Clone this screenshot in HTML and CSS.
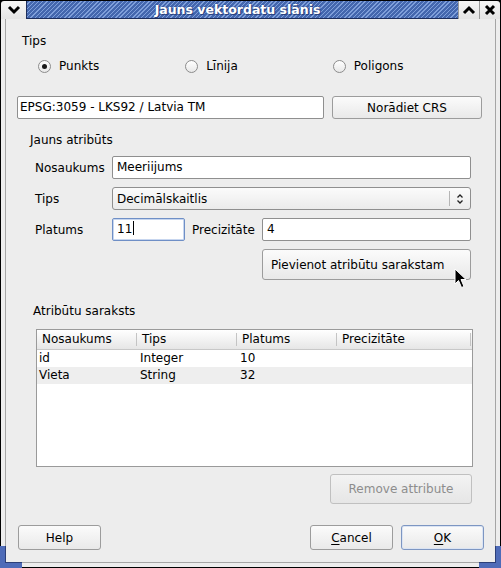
FILE: index.html
```html
<!DOCTYPE html>
<html>
<head>
<meta charset="utf-8">
<link rel="stylesheet" href="styles.css">
</head>
<body>
<div class="window">
  <div class="titlebar">
    <div class="tbtn tbtn-left">
      <svg width="14" height="10" viewBox="0 0 14 10"><polyline points="2,2 7,7 12,2" fill="none" stroke="#000" stroke-width="3"/></svg>
    </div>
    <div class="tcaption"><span>Jauns vektordatu slānis</span></div>
    <div class="tbtn">
      <svg width="14" height="10" viewBox="0 0 14 10"><polyline points="2,8 7,3 12,8" fill="none" stroke="#000" stroke-width="3"/></svg>
    </div>
    <div class="tbtn tbtn-right">
      <svg width="12" height="12" viewBox="0 0 12 12"><path d="M2 2 L10 10 M10 2 L2 10" stroke="#000" stroke-width="3"/></svg>
    </div>
  </div>
  <div class="frame">
    <div class="client">
      <div class="lbl tips-lbl">Tips</div>
      <div class="radios">
        <div class="radio r1"><span class="rdot on"></span>Punkts</div>
        <div class="radio r2"><span class="rdot"></span>Līnija</div>
        <div class="radio r3"><span class="rdot"></span>Poligons</div>
      </div>
      <div class="crs-row">
        <div class="input crs-input">EPSG:3059 - LKS92 / Latvia TM</div>
        <div class="btn crs-btn">Norādiet CRS</div>
      </div>
      <div class="lbl grp-lbl">Jauns atribūts</div>
      <div class="frow">
        <div class="flabel">Nosaukums</div>
        <div class="input wide">Meeriijums</div>
      </div>
      <div class="frow">
        <div class="flabel">Tips</div>
        <div class="combo wide"><span class="ctext">Decimālskaitlis</span><span class="csep"></span>
          <svg class="carrow" width="8" height="12" viewBox="0 0 8 12"><polyline points="1.5,4.5 4,2 6.5,4.5" fill="none" stroke="#222" stroke-width="1.3"/><polyline points="1.5,7.5 4,10 6.5,7.5" fill="none" stroke="#222" stroke-width="1.3"/></svg>
        </div>
      </div>
      <div class="frow">
        <div class="flabel">Platums</div>
        <div class="input focus narrow">11<span class="caret"></span></div>
        <div class="flabel2">Precizitāte</div>
        <div class="input prec">4</div>
      </div>
      <div class="addrow">
        <div class="btn add-btn">Pievienot atribūtu sarakstam</div>
      </div>
      <div class="lbl list-lbl">Atribūtu saraksts</div>
      <div class="table">
        <div class="thead">
          <div class="th c1">Nosaukums</div>
          <div class="th c2">Tips</div>
          <div class="th c3">Platums</div>
          <div class="th c4">Precizitāte</div>
        </div>
        <div class="trow">
          <div class="td c1">id</div><div class="td c2">Integer</div><div class="td c3">10</div><div class="td c4"></div>
        </div>
        <div class="trow alt">
          <div class="td c1">Vieta</div><div class="td c2">String</div><div class="td c3">32</div><div class="td c4"></div>
        </div>
      </div>
      <div class="remrow">
        <div class="btn disabled rem-btn">Remove attribute</div>
      </div>
      <div class="bottom">
        <div class="btn bbtn">Help</div>
        <div class="spacer"></div>
        <div class="btn bbtn"><u>C</u>ancel</div>
        <div class="btn bbtn default"><u>O</u>K</div>
      </div>
    </div>
  </div>
  <div class="corner cl"></div>
  <div class="corner cr"></div>
  <svg class="pointer" width="14" height="22" viewBox="0 0 14 22"><path d="M1 1 L1 16 L4.5 12.5 L7.5 19.5 L10 18.5 L7 11.5 L12 11.5 Z" fill="#000" stroke="#fff" stroke-width="1"/></svg>
</div>
</body>
</html>
```

FILE: styles.css
```css
* { box-sizing: border-box; }
html, body { margin: 0; padding: 0; background: #ededed; }
body {
  font-family: "DejaVu Sans", "Liberation Sans", sans-serif;
  font-size: 12px;
  color: #000;
}
.window {
  position: relative;
  width: 501px;
  height: 568px;
  background: #ededed;
  display: flex;
  flex-direction: column;
}
.titlebar {
  height: 19px;
  display: flex;
  background: #000;
  padding: 0 1px 0 1px;
  border-top: 1px solid #000;
}
.tbtn {
  width: 21px;
  height: 18px;
  background: linear-gradient(#f6f6f6, #e4e4e4);
  display: flex;
  align-items: center;
  justify-content: center;
  border-left: 1px solid #9a9a9a;
}
.tbtn-left { width: 25px; border-left: none; border-top-left-radius: 3px; }
.tbtn-right { border-top-right-radius: 3px; }
.tcaption {
  flex: 1;
  height: 18px;
  border-bottom: 1px solid #1c2d5c;
  border-left: 1px solid #1c2d5c;
  background:
    repeating-linear-gradient(135deg, #4467ae 0px, #4467ae 2px, #7f9fda 2px, #7f9fda 3px);
  display: flex;
  align-items: center;
  justify-content: center;
  color: #fff;
  font-weight: bold;
  font-size: 12.5px;
  text-shadow: 0 0 2px #2a4280, 1px 1px 0 #2a4280;
  padding-right: 10px;
}
.frame {
  flex: 1;
  display: flex;
  border-left: 1px solid #000;
  border-right: 1px solid #000;
  border-bottom: 1px solid #000;
  padding: 0 4px 4px 4px;
  background: #ededed;
}
.client {
  flex: 1;
  border-left: 1px solid #a5a5a5;
  border-right: 1px solid #a5a5a5;
  border-bottom: 1px solid #a5a5a5;
  display: flex;
  flex-direction: column;
  padding: 0 11px 0 11px;
}
.lbl { line-height: 15px; height: 15px; }
.tips-lbl { margin-top: 15px; padding-left: 5px; }
.radios { margin-top: 10px; height: 15px; position: relative; display: flex; }
.radio { display: flex; align-items: center; line-height: 15px; flex-shrink: 0; }
.r1 { margin-left: 21px; }
.r2 { margin-left: 86px; }
.r3 { margin-left: 95px; }
.rdot {
  width: 13px; height: 13px;
  border: 1px solid #8c8c8c;
  border-radius: 50%;
  background: linear-gradient(#ffffff, #e8e8e8);
  margin-right: 8px;
  display: inline-flex;
  align-items: center;
  justify-content: center;
  flex-shrink: 0;
}
.rdot.on::after {
  content: "";
  width: 5px; height: 5px; border-radius: 50%;
  background: #1a1a1a;
}
.crs-row { margin-top: 22px; display: flex; height: 23px; }
.input {
  height: 23px;
  border: 1px solid #8f8f8f;
  border-radius: 2px;
  background: #fff;
  padding: 0 4px;
  line-height: 21px;
  white-space: nowrap;
  flex-shrink: 0;
}
.crs-input { width: 307px; padding-left: 2px; }
.btn {
  border: 1px solid #9c9c9c;
  border-radius: 3px;
  background: linear-gradient(#fbfbfb, #e9e9e9);
  display: flex;
  align-items: center;
  justify-content: center;
  white-space: nowrap;
  flex-shrink: 0;
}
.crs-btn { width: 150px; margin-left: 8px; }
.grp-lbl { margin-top: 14px; padding-left: 13px; }
.frow { margin-top: 8px; display: flex; height: 23px; align-items: center; }
.flabel { width: 95px; padding-left: 18px; flex-shrink: 0; }
.flabel2 { width: 77px; padding-left: 7px; flex-shrink: 0; }
.wide { width: 359px; }
.combo {
  height: 23px;
  border: 1px solid #8f8f8f;
  border-radius: 3px;
  background: linear-gradient(#fbfbfb, #ebebeb);
  display: flex;
  align-items: center;
  padding-left: 4px;
  flex-shrink: 0;
}
.ctext { flex: 1; }
.csep { width: 1px; height: 15px; background: #b5b5b5; margin-right: 6px; }
.carrow { margin-right: 6px; }
.narrow { width: 73px; }
.focus { border-color: #6f8fc6; box-shadow: inset 0 0 0 1px #c7d6ef; }
.caret { display: inline-block; width: 1px; height: 14px; background: #000; vertical-align: -2px; margin-left: 1px; }
.prec { width: 209px; }
.addrow { margin-top: 8px; display: flex; padding-left: 245px; }
.add-btn { width: 209px; height: 31px; justify-content: flex-start; padding-left: 8px; }
.list-lbl { margin-top: 24px; padding-left: 16px; }
.table {
  margin-top: 10px;
  margin-left: 19px;
  width: 437px;
  height: 138px;
  border: 1px solid #9a9a9a;
  background: #fff;
}
.thead {
  height: 20px;
  display: flex;
  background: linear-gradient(#ffffff, #e6e6e6);
  border-bottom: 1px solid #c8c8c8;
}
.th { line-height: 19px; padding-left: 5px; position: relative; }
.th::after {
  content: "";
  position: absolute;
  right: 0; top: 3px; width: 1px; height: 13px;
  background: #c4c4c4;
}
.c1 { width: 100px; }
.c2 { width: 100px; }
.c3 { width: 100px; }
.c4 { width: 134px; }
.trow { display: flex; height: 17px; line-height: 17px; }
.trow.alt { background: #eeeeee; }
.td { padding-left: 2px; }
.td.c2, .td.c3 { padding-left: 3px; }
.remrow { margin-top: 7px; display: flex; padding-left: 313px; }
.rem-btn { width: 142px; height: 30px; }
.disabled { color: #8d8d8d; border-color: #c0c0c0; background: linear-gradient(#f3f3f3, #e6e6e6); }
.bottom { margin-top: 21px; display: flex; height: 25px; padding-left: 1px; }
.bbtn { width: 83px; height: 25px; }
.bbtn + .bbtn { margin-left: 8px; }
.spacer { flex: 1; }
.default { border-color: #7d96c2; box-shadow: inset 0 0 0 1px #dbe4f3; }
u { text-decoration: underline; text-underline-offset: 2px; }
.corner { position: absolute; bottom: 0; width: 22px; height: 22px; }
.cl { left: 0; border-left: 5px solid #4e6bb8; border-bottom: 5px solid #4e6bb8; box-shadow: inset 1px -1px 0 #2c3f78; }
.cr { right: 0; border-right: 5px solid #4e6bb8; border-bottom: 5px solid #4e6bb8; box-shadow: inset -1px -1px 0 #2c3f78; }
.pointer { position: absolute; left: 454px; top: 268px; }
```
